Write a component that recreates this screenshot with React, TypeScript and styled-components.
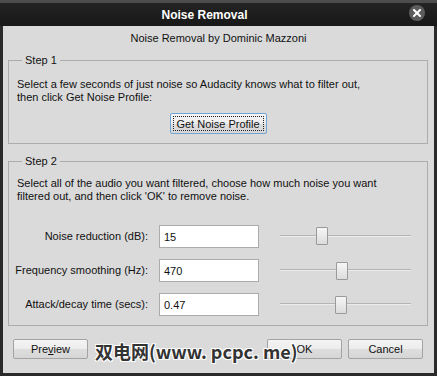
import React from 'react'
import styled, { createGlobalStyle } from 'styled-components'

const Global = createGlobalStyle`
  html, body { margin: 0; padding: 0; background: #2b2b2b; }
  body { font-family: "Liberation Sans", Arial, sans-serif; font-size: 11px; color: #111; }
`

const Window = styled.div`
  position: relative;
  width: 437px;
  height: 376px;
  display: flex;
  flex-direction: column;
  background: #2a2a2a;
  overflow: hidden;
`

const TitleBar = styled.div`
  height: 23px;
  border-top: 3px solid #4d4d4d;
  background: linear-gradient(#232323, #181818);
  display: flex;
  align-items: center;
`

const Title = styled.div`
  flex: 1;
  text-align: center;
  color: #fff;
  font-weight: bold;
  font-size: 12px;
`

const CloseButton = styled.div`
  width: 16px;
  height: 16px;
  margin: -3px 12px 0 0;
  border-radius: 50%;
  background: #5c5c5c;
  display: flex;
  align-items: center;
  justify-content: center;
`

const Body = styled.div`
  flex: 1;
  margin: 0 3px 3px 3px;
  background: #dadada;
  display: flex;
  flex-direction: column;
`

const Subtitle = styled.div`
  text-align: center;
  line-height: 13px;
  padding-top: 6px;
`

const Group = styled.fieldset<{ $top: number; $padTop: number; $padBottom: number }>`
  margin: ${p => p.$top}px 6px 0 5px;
  padding: ${p => p.$padTop}px 8px ${p => p.$padBottom}px 8px;
  border: 1px solid #acacac;
  min-width: 0;
`

const Legend = styled.legend`
  padding: 0 3px;
  margin-left: 5px;
  line-height: 13px;
`

const Para = styled.p`
  margin: 0;
  line-height: 13px;
`

const Center = styled.div`
  display: flex;
  justify-content: center;
  margin-top: 9px;
`

const Button = styled.button<{ $width: number; $focus?: boolean }>`
  width: ${p => p.$width}px;
  height: ${p => (p.$focus ? 21 : 20)}px;
  padding: 0;
  font-family: "Liberation Sans", Arial, sans-serif;
  font-size: 11px;
  color: #111;
  border: 1px solid ${p => (p.$focus ? '#6fa6d6' : '#a3a3a3')};
  border-radius: 2px;
  background: linear-gradient(#f4f4f4 0%, #ececec 50%, #dedede 51%, #d6d6d6 100%);
  position: relative;
  cursor: default;
  ${p =>
    p.$focus &&
    `&::after {
      content: '';
      position: absolute;
      inset: 2px;
      border: 1px dotted #222;
    }`}
`

const Rows = styled.div`
  display: grid;
  grid-template-columns: 137px 100px 131px;
  column-gap: 11px;
  row-gap: 11px;
  margin: 22px 0 0 -6px;
  & > :nth-child(3n) { margin-left: 10px; }
`

const Label = styled.label`
  text-align: right;
  align-self: center;
  line-height: 13px;
  white-space: nowrap;
`

const Input = styled.input`
  height: 23px;
  box-sizing: border-box;
  border: 1px solid #ababab;
  background: #fff;
  padding: 0 4px;
  font-family: "Liberation Sans", Arial, sans-serif;
  font-size: 11px;
  color: #111;
  outline: none;
  width: 100px;
`

const Slider = styled.div`
  position: relative;
  height: 23px;
  width: 131px;
`

const Track = styled.div`
  position: absolute;
  left: 0;
  right: 0;
  top: 10px;
  height: 1px;
  background: #b4b4b4;
  border-bottom: 1px solid #ececec;
`

const Thumb = styled.div<{ $pos: number; $top: number }>`
  position: absolute;
  left: ${p => p.$pos}px;
  top: ${p => p.$top}px;
  width: 10px;
  height: 16px;
  border: 1px solid #9a9a9a;
  border-radius: 1px;
  background: linear-gradient(#f6f6f6, #dcdcdc);
`

const Footer = styled.div`
  display: flex;
  align-items: center;
  padding: 13px 11px 0 10px;
  gap: 6px;
`

const Spacer = styled.div`
  flex: 1;
`

const Watermark = styled.div`
  position: absolute;
  left: 95px;
  top: 338px;
  font-family: "Noto Sans CJK SC", "DejaVu Sans", sans-serif;
  font-weight: bold;
  font-size: 18px;
  line-height: 26px;
  color: #333;
  text-shadow: -1px -1px 0 #fff, 1px -1px 0 #fff, -1px 1px 0 #fff, 1px 1px 0 #fff;
  pointer-events: none;
  white-space: nowrap;
`

const rows = [
  { label: 'Noise reduction (dB):', value: '15', pos: 36, top: 2 },
  { label: 'Frequency smoothing (Hz):', value: '470', pos: 56, top: 3 },
  { label: 'Attack/decay time (secs):', value: '0.47', pos: 55, top: 3 },
]

export default function App() {
  return (
    <Window>
      <Global />
      <TitleBar>
        <Title>Noise Removal</Title>
        <CloseButton>
          <svg width="8" height="8" viewBox="0 0 8 8">
            <path d="M1 1 L7 7 M7 1 L1 7" stroke="#fff" strokeWidth="2" strokeLinecap="square" />
          </svg>
        </CloseButton>
      </TitleBar>
      <Body>
        <Subtitle>Noise Removal by Dominic Mazzoni</Subtitle>
        <Group $top={9} $padTop={11} $padBottom={9}>
          <Legend>Step 1</Legend>
          <Para>
            Select a few seconds of just noise so Audacity knows what to filter out,
            <br />
            then click Get Noise Profile:
          </Para>
          <Center>
            <Button $width={97} $focus>Get Noise Profile</Button>
          </Center>
        </Group>
        <Group $top={11} $padTop={9} $padBottom={9}>
          <Legend>Step 2</Legend>
          <Para>
            Select all of the audio you want filtered, choose how much noise you want
            <br />
            filtered out, and then click 'OK' to remove noise.
          </Para>
          <Rows>
            {rows.map(r => (
              <React.Fragment key={r.label}>
                <Label>{r.label}</Label>
                <Input defaultValue={r.value} />
                <Slider>
                  <Track />
                  <Thumb $pos={r.pos} $top={r.top} />
                </Slider>
              </React.Fragment>
            ))}
          </Rows>
        </Group>
        <Footer>
          <Button $width={75}>
            Pre<u>v</u>iew
          </Button>
          <Spacer />
          <Button $width={75}>OK</Button>
          <Button $width={75}>Cancel</Button>
        </Footer>
      </Body>
      <Watermark>双电网(www. pcpc. me)</Watermark>
    </Window>
  )
}
